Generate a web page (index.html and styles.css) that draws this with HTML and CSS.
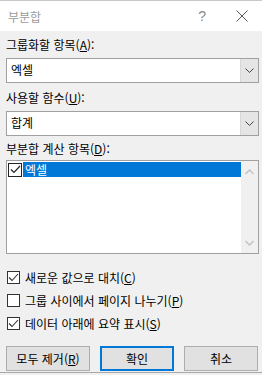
FILE: index.html
```html
<!DOCTYPE html>
<html lang="ko">
<head>
  <meta charset="UTF-8">
  <title>부분합</title>
  <link rel="stylesheet" href="styles.css">
</head>
<body>
  <div class="dialog">
    <div class="title-bar">
      <span class="title">부분합</span>
      <span class="help">?</span>
      <svg class="close" width="12" height="12" viewBox="0 0 12 12">
        <path d="M0.5 0.5 L11.5 11.5 M11.5 0.5 L0.5 11.5" stroke="#555" stroke-width="1" fill="none"/>
      </svg>
    </div>

    <div class="content">
      <div class="label label-first">그룹화할 항목(<u>A</u>):</div>
      <div class="combo">
        <span class="combo-value">엑셀</span>
        <span class="combo-button">
          <svg width="9" height="6" viewBox="0 0 9 6"><path d="M0.5 0.5 L4.5 4.5 L8.5 0.5" stroke="#444" fill="none"/></svg>
        </span>
      </div>

      <div class="label label-second">사용할 함수(<u>U</u>):</div>
      <div class="combo">
        <span class="combo-value">합계</span>
        <span class="combo-button">
          <svg width="9" height="6" viewBox="0 0 9 6"><path d="M0.5 0.5 L4.5 4.5 L8.5 0.5" stroke="#444" fill="none"/></svg>
        </span>
      </div>

      <div class="label label-third">부분합 계산 항목(<u>D</u>):</div>
      <div class="listbox">
        <div class="list-items">
          <div class="list-row">
            <span class="check check-dark">
              <svg width="11" height="9" viewBox="0 0 11 9"><path d="M1 4.5 L4 7.5 L10 1" stroke="#222" stroke-width="1.2" fill="none"/></svg>
            </span>
            <span class="list-text">엑셀</span>
          </div>
        </div>
        <div class="scrollbar">
          <svg width="9" height="6" viewBox="0 0 9 6"><path d="M0.5 5 L4.5 1 L8.5 5" stroke="#c2c2c2" stroke-width="1.5" fill="none"/></svg>
          <svg width="9" height="6" viewBox="0 0 9 6"><path d="M0.5 1 L4.5 5 L8.5 1" stroke="#c2c2c2" stroke-width="1.5" fill="none"/></svg>
        </div>
      </div>

      <div class="options">
        <label class="option">
          <span class="check">
            <svg width="11" height="9" viewBox="0 0 11 9"><path d="M1 4.5 L4 7.5 L10 1" stroke="#333" stroke-width="1.1" fill="none"/></svg>
          </span>
          <span>새로운 값으로 대치(<u>C</u>)</span>
        </label>
        <label class="option">
          <span class="check"></span>
          <span>그룹 사이에서 페이지 나누기(<u>P</u>)</span>
        </label>
        <label class="option">
          <span class="check">
            <svg width="11" height="9" viewBox="0 0 11 9"><path d="M1 4.5 L4 7.5 L10 1" stroke="#333" stroke-width="1.1" fill="none"/></svg>
          </span>
          <span>데이터 아래에 요약 표시(<u>S</u>)</span>
        </label>
      </div>

      <div class="buttons">
        <button class="btn">모두 제거(<u>R</u>)</button>
        <button class="btn btn-default">확인</button>
        <button class="btn">취소</button>
      </div>
    </div>
  </div>
</body>
</html>
```

FILE: styles.css
```css
body, html {
  margin: 0;
  padding: 0;
  background-color: #f0f0f0;
  font-family: 'Noto Sans CJK KR', 'Noto Sans', sans-serif;
  font-size: 12px;
  color: #000;
}

.dialog {
  width: 262px;
  height: 373px;
  border-top: 1px solid #c8c8c8;
  border-bottom: 1px solid #a8a8a8;
  box-sizing: border-box;
  background-color: #f0f0f0;
}

.title-bar {
  height: 30px;
  background-color: #fff;
  display: flex;
  align-items: center;
  padding-left: 8px;
}

.title {
  color: #9a9a9a;
  font-size: 12px;
  flex: 1;
}

.help {
  color: #8a8a8a;
  font-family: 'Liberation Sans', sans-serif;
  font-size: 14px;
  margin-right: 30px;
}

.close {
  margin-right: 14px;
}

.content {
  padding: 0 3px 0 6px;
}

.label {
  height: 16px;
  line-height: 16px;
  white-space: nowrap;
}

.label-first {
  margin-top: 6px;
}

.label-second {
  margin-top: 7px;
}

.label-third {
  margin-top: 5px;
}

.combo {
  margin-top: 5px;
  height: 25px;
  border: 1px solid #a0a0a0;
  background-color: #fff;
  box-sizing: border-box;
  display: flex;
}

.combo-value {
  flex: 1;
  line-height: 22px;
  padding-left: 4px;
}

.combo-button {
  width: 17px;
  background-color: #e5e5e5;
  border-left: 1px solid #d8d8d8;
  display: flex;
  align-items: center;
  justify-content: center;
}

.listbox {
  margin-top: 3px;
  height: 94px;
  border: 1px solid #a0a0a0;
  background-color: #fff;
  box-sizing: border-box;
  display: flex;
}

.list-items {
  flex: 1;
  padding-top: 1px;
}

.list-row {
  display: flex;
  align-items: center;
  height: 15px;
}

.list-text {
  flex: 1;
  background-color: #0078d7;
  color: #fff;
  height: 15px;
  line-height: 15px;
  padding-left: 2px;
}

.scrollbar {
  width: 17px;
  background-color: #f0f0f0;
  display: flex;
  flex-direction: column;
  justify-content: space-between;
  align-items: center;
  padding: 8px 0 7px;
}

.check {
  width: 13px;
  height: 13px;
  border: 1px solid #333;
  background-color: #fff;
  box-sizing: border-box;
  display: flex;
  align-items: center;
  justify-content: center;
  flex-shrink: 0;
}

.check-dark {
  width: 14px;
  height: 14px;
  border-color: #222;
  margin: 0 1px 0 1px;
}

.options {
  margin-top: 12px;
}

.option {
  display: flex;
  align-items: center;
  gap: 5px;
  height: 23px;
  padding-left: 1px;
  white-space: nowrap;
}

.buttons {
  margin-top: 11px;
  display: flex;
  justify-content: space-between;
  padding-right: 1px;
}

.btn {
  width: 84px;
  height: 25px;
  font-family: 'Noto Sans CJK KR', 'Noto Sans', sans-serif;
  font-size: 12px;
  background-color: #e1e1e1;
  border: 1px solid #adadad;
  padding: 0;
  color: #000;
}

.btn-default {
  width: 74px;
  border: 2px solid #0078d7;
}

.btn:last-child {
  width: 74px;
}
```
